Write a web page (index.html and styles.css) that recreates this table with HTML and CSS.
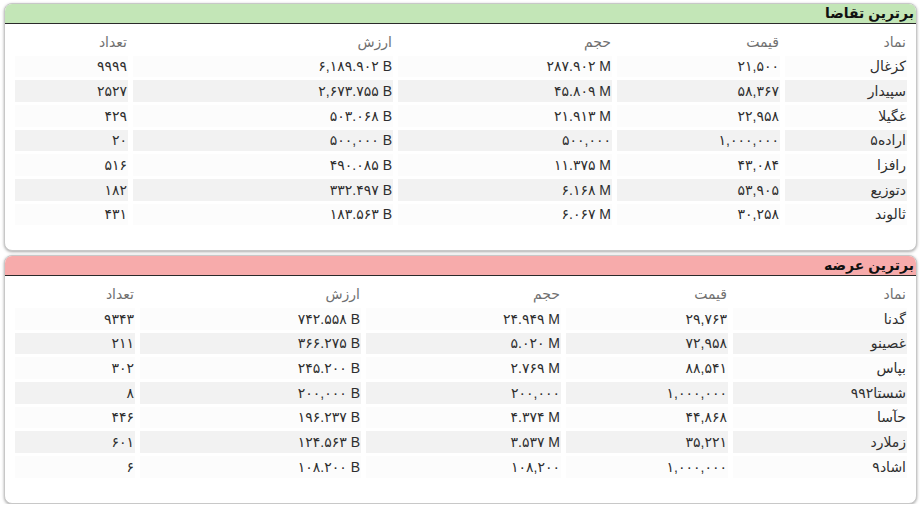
FILE: index.html
```html
<!DOCTYPE html>
<html lang="fa" dir="rtl">
<head>
<meta charset="utf-8">
<title>برترین تقاضا و عرضه</title>
<link rel="stylesheet" href="styles.css">
</head>
<body>
<div class="page">
  <section class="card">
    <div class="card-head head-buy">برترین تقاضا</div>
    <div class="card-body">
      <table class="grid grid-buy">
        <colgroup>
          <col class="c-sym"><col class="c-price"><col class="c-vol"><col class="c-val"><col class="c-cnt">
        </colgroup>
        <thead>
          <tr><th>نماد</th><th>قیمت</th><th>حجم</th><th>ارزش</th><th>تعداد</th></tr>
        </thead>
        <tbody>
          <tr><td>کزغال</td><td class="num">۲۱,۵۰۰</td><td class="num">۲۸۷.۹۰۲ M</td><td class="num">۶,۱۸۹.۹۰۲ B</td><td class="num">۹۹۹۹</td></tr>
          <tr><td>سپیدار</td><td class="num">۵۸,۳۶۷</td><td class="num">۴۵.۸۰۹ M</td><td class="num">۲,۶۷۳.۷۵۵ B</td><td class="num">۲۵۲۷</td></tr>
          <tr><td>غگیلا</td><td class="num">۲۲,۹۵۸</td><td class="num">۲۱.۹۱۳ M</td><td class="num">۵۰۳.۰۶۸ B</td><td class="num">۴۲۹</td></tr>
          <tr><td>اراده۵</td><td class="num">۱,۰۰۰,۰۰۰</td><td class="num">۵۰۰,۰۰۰</td><td class="num">۵۰۰,۰۰۰ B</td><td class="num">۲۰</td></tr>
          <tr><td>رافزا</td><td class="num">۴۳,۰۸۴</td><td class="num">۱۱.۳۷۵ M</td><td class="num">۴۹۰.۰۸۵ B</td><td class="num">۵۱۶</td></tr>
          <tr><td>دتوزیع</td><td class="num">۵۳,۹۰۵</td><td class="num">۶.۱۶۸ M</td><td class="num">۳۳۲.۴۹۷ B</td><td class="num">۱۸۲</td></tr>
          <tr><td>ثالوند</td><td class="num">۳۰,۲۵۸</td><td class="num">۶.۰۶۷ M</td><td class="num">۱۸۳.۵۶۳ B</td><td class="num">۴۳۱</td></tr>
        </tbody>
      </table>
    </div>
  </section>

  <section class="card">
    <div class="card-head head-sell">برترین عرضه</div>
    <div class="card-body">
      <table class="grid grid-sell">
        <colgroup>
          <col class="c-sym"><col class="c-price"><col class="c-vol"><col class="c-val"><col class="c-cnt">
        </colgroup>
        <thead>
          <tr><th>نماد</th><th>قیمت</th><th>حجم</th><th>ارزش</th><th>تعداد</th></tr>
        </thead>
        <tbody>
          <tr><td>گدنا</td><td class="num">۲۹,۷۶۳</td><td class="num">۲۴.۹۴۹ M</td><td class="num">۷۴۲.۵۵۸ B</td><td class="num">۹۳۴۳</td></tr>
          <tr><td>غصینو</td><td class="num">۷۲,۹۵۸</td><td class="num">۵.۰۲۰ M</td><td class="num">۳۶۶.۲۷۵ B</td><td class="num">۲۱۱</td></tr>
          <tr><td>بپاس</td><td class="num">۸۸,۵۴۱</td><td class="num">۲.۷۶۹ M</td><td class="num">۲۴۵.۲۰۰ B</td><td class="num">۳۰۲</td></tr>
          <tr><td>شستا۹۹۲</td><td class="num">۱,۰۰۰,۰۰۰</td><td class="num">۲۰۰,۰۰۰</td><td class="num">۲۰۰,۰۰۰ B</td><td class="num">۸</td></tr>
          <tr><td>حآسا</td><td class="num">۴۴,۸۶۸</td><td class="num">۴.۳۷۴ M</td><td class="num">۱۹۶.۲۳۷ B</td><td class="num">۴۴۶</td></tr>
          <tr><td>زملارد</td><td class="num">۳۵,۲۲۱</td><td class="num">۳.۵۳۷ M</td><td class="num">۱۲۴.۵۶۳ B</td><td class="num">۶۰۱</td></tr>
          <tr><td>اشاد۹</td><td class="num">۱,۰۰۰,۰۰۰</td><td class="num">۱۰۸,۲۰۰</td><td class="num">۱۰۸.۲۰۰ B</td><td class="num">۶</td></tr>
        </tbody>
      </table>
    </div>
  </section>
</div>
</body>
</html>
```

FILE: styles.css
```css
* { box-sizing: border-box; }

html, body {
  margin: 0;
  padding: 0;
  background: #ffffff;
}

body {
  font-family: "Liberation Sans", "DejaVu Sans", sans-serif;
  font-size: 14px;
  color: #333333;
}

.page {
  padding: 3px 4px 0 4px;
  display: flex;
  flex-direction: column;
  gap: 4px;
}

.card {
  background: #ffffff;
  border: 1px solid #c8c8c8;
  border-radius: 8px;
  box-shadow: 0 1px 3px rgba(0, 0, 0, 0.35);
  overflow: hidden;
}

.card-head {
  height: 20px;
  line-height: 18px;
  padding: 0 2px;
  font-weight: bold;
  font-size: 14px;
  color: #111111;
  border-bottom: 1.5px solid #2a2a2a;
}

.head-buy { background: #c3e6b7; }
.head-sell { background: #f7abab; }

.card-body {
  padding: 4px 4px 22px 5px;
}

.grid {
  width: 100%;
  table-layout: fixed;
  border-collapse: separate;
  border-spacing: 5px 3px;
}

.grid th,
.grid td {
  height: 21.67px;
  padding: 0 1px;
  text-align: right;
  white-space: nowrap;
  overflow: hidden;
}

.grid th {
  font-weight: normal;
  color: #707070;
}

.grid td {
  color: #2e2e2e;
}

.grid tbody tr:nth-child(odd) td { background: #fcfcfc; }
.grid tbody tr:nth-child(even) td { background: #f2f2f2; }

.grid td.num {
  direction: ltr;
  text-align: right;
}

.grid-buy .c-sym { width: 122px; }
.grid-buy .c-price { width: 163px; }
.grid-buy .c-vol { width: 214px; }
.grid-buy .c-val { width: 260px; }
.grid-buy .c-cnt { width: 113px; }

.grid-sell .c-sym { width: 174px; }
.grid-sell .c-price { width: 162px; }
.grid-sell .c-vol { width: 195px; }
.grid-sell .c-val { width: 221px; }
.grid-sell .c-cnt { width: 120px; }
```
